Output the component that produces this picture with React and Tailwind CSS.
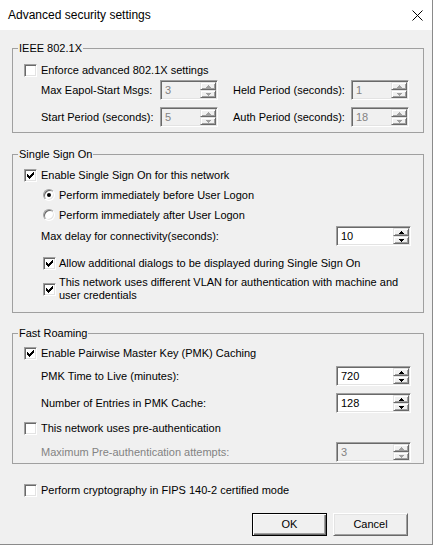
import React from "react";

const sunken =
  "border border-t-[#a0a0a0] border-l-[#a0a0a0] border-r-white border-b-white shadow-[inset_1px_1px_0_#696969,inset_-1px_-1px_0_#e3e3e3]";

function Check({ checked }) {
  const cols = [2, 3, 4, 3, 2, 1, 0];
  return (
    <span className={`flex h-[13px] w-[13px] shrink-0 items-center justify-center bg-white ${sunken}`}>
      {checked && (
        <svg width="7" height="7" viewBox="0 0 7 7" shapeRendering="crispEdges">
          {cols.map((y, x) => (
            <rect key={x} x={x} y={y} width="1" height="3" fill="#000" />
          ))}
        </svg>
      )}
    </span>
  );
}

function Radio({ checked }) {
  return (
    <span
      className={`flex h-[12px] w-[12px] shrink-0 items-center justify-center rounded-full bg-white ${sunken}`}
    >
      {checked && <span className="h-[4px] w-[4px] rounded-full bg-black" />}
    </span>
  );
}

function Arrow({ up, disabled }) {
  return (
    <svg width="5" height="3" viewBox="0 0 5 3" shapeRendering="crispEdges">
      <path
        d={up ? "M2 0h1v1h1v1h1v1H0V2h1V1h1z" : "M0 0h5v1H4v1H3v1H2V2H1V1H0z"}
        fill={disabled ? "#a0a0a0" : "#000"}
      />
    </svg>
  );
}

function SpinButton({ up, disabled }) {
  return (
    <span className="flex h-[8px] w-[16px] items-center justify-center border border-t-[#e3e3e3] border-l-[#e3e3e3] border-r-[#696969] border-b-[#696969] bg-[#f0f0f0] shadow-[inset_1px_1px_0_#fff,inset_-1px_-1px_0_#a0a0a0]">
      <Arrow up={up} disabled={disabled} />
    </span>
  );
}

function Spin({ value, disabled, wide }) {
  return (
    <div
      className={`flex h-[20px] shrink-0 ${wide ? "w-[75px]" : "w-[58px]"} ${sunken} ${
        disabled ? "bg-[#f0f0f0] text-[#838383]" : "bg-white text-black"
      }`}
    >
      <span className="flex flex-1 items-center pl-[4px]">{value}</span>
      <div className="flex flex-col py-[1px] pr-[1px]">
        <SpinButton up disabled={disabled} />
        <SpinButton disabled={disabled} />
      </div>
    </div>
  );
}

function Group({ title, className, children }) {
  return (
    <fieldset className={`w-[412px] border border-[#a0a0a0] ${className}`}>
      <legend className="ml-[5px] px-[1px] leading-[13px]">{title}</legend>
      {children}
    </fieldset>
  );
}

export default function App() {
  return (
    <div className="flex h-[545px] w-[433px] flex-col border-r border-b border-[#8a8a8a] bg-[#f0f0f0] font-['Liberation_Sans',Arial,sans-serif] text-[11px] text-black">
      {/* Barra de titulo */}
      <div className="flex h-[30px] shrink-0 items-center justify-between bg-white pl-[8px] pr-[9px]">
        <span className="text-[12px]">Advanced security settings</span>
        <svg width="11" height="11" viewBox="0 0 11 11">
          <path d="M0.5 0.5L10.5 10.5M10.5 0.5L0.5 10.5" stroke="#000" strokeWidth="1" />
        </svg>
      </div>

      <div className="flex flex-col pl-[12px]">
        {/* IEEE 802.1X */}
        <Group title="IEEE 802.1X" className="mt-[12px] pb-[5px]">
          <div className="ml-[11px] mt-[6px] flex h-[18px] items-center gap-[4px]">
            <Check />
            <span>Enforce advanced 802.1X settings</span>
          </div>
          <div className="ml-[28px] mt-[1px] flex h-[20px] items-center">
            <span className="w-[119px]">Max Eapol-Start Msgs:</span>
            <Spin value="3" disabled />
            <span className="ml-[15px] w-[118px]">Held Period (seconds):</span>
            <Spin value="1" disabled />
          </div>
          <div className="ml-[28px] mt-[7px] flex h-[20px] items-center">
            <span className="w-[119px]">Start Period (seconds):</span>
            <Spin value="5" disabled />
            <span className="ml-[15px] w-[118px]">Auth Period (seconds):</span>
            <Spin value="18" disabled />
          </div>
        </Group>

        {/* Single Sign On */}
        <Group title="Single Sign On" className="mt-[15px] pb-[10px]">
          <div className="ml-[11px] mt-[5px] flex h-[18px] items-center gap-[4px]">
            <Check checked />
            <span>Enable Single Sign On for this network</span>
          </div>
          <div className="ml-[30px] mt-[2px] flex h-[18px] items-center gap-[4px]">
            <Radio checked />
            <span>Perform immediately before User Logon</span>
          </div>
          <div className="ml-[30px] mt-[2px] flex h-[18px] items-center gap-[4px]">
            <Radio />
            <span>Perform immediately after User Logon</span>
          </div>
          <div className="ml-[28px] mr-[12px] mt-[2px] flex h-[20px] items-center justify-between">
            <span>Max delay for connectivity(seconds):</span>
            <Spin value="10" wide />
          </div>
          <div className="ml-[30px] mt-[8px] flex h-[18px] items-center gap-[3px]">
            <Check checked />
            <span>Allow additional dialogs to be displayed during Single Sign On</span>
          </div>
          <div className="ml-[30px] mt-[4px] flex items-center gap-[3px]">
            <Check checked />
            <span className="leading-[13px]">
              This network uses different VLAN for authentication with machine and
              <br />
              user credentials
            </span>
          </div>
        </Group>

        {/* Fast Roaming */}
        <Group title="Fast Roaming" className="mt-[14px] pb-[1px]">
          <div className="ml-[11px] mt-[4px] flex h-[18px] items-center gap-[4px]">
            <Check checked />
            <span>Enable Pairwise Master Key (PMK) Caching</span>
          </div>
          <div className="ml-[28px] mr-[12px] mt-[4px] flex h-[20px] items-center justify-between">
            <span>PMK Time to Live (minutes):</span>
            <Spin value="720" wide />
          </div>
          <div className="ml-[28px] mr-[12px] mt-[7px] flex h-[20px] items-center justify-between">
            <span>Number of Entries in PMK Cache:</span>
            <Spin value="128" wide />
          </div>
          <div className="ml-[11px] mt-[6px] flex h-[18px] items-center gap-[4px]">
            <Check />
            <span>This network uses pre-authentication</span>
          </div>
          <div className="ml-[28px] mr-[12px] mt-[5px] flex h-[20px] items-center justify-between">
            <span className="text-[#838383]">Maximum Pre-authentication attempts:</span>
            <Spin value="3" disabled wide />
          </div>
        </Group>

        {/* FIPS */}
        <div className="ml-[12px] mt-[17px] flex h-[18px] items-center gap-[4px]">
          <Check />
          <span>Perform cryptography in FIPS 140-2 certified mode</span>
        </div>

        {/* Botones */}
        <div className="mt-[14px] flex justify-end gap-[6px] pr-[24px]">
          <button
            type="button"
            className="h-[23px] w-[75px] border border-black bg-[#f0f0f0] shadow-[inset_1px_1px_0_#fff,inset_-1px_-1px_0_#696969,inset_-2px_-2px_0_#a0a0a0]"
          >
            OK
          </button>
          <button
            type="button"
            className="h-[23px] w-[75px] border border-t-white border-l-white border-r-[#696969] border-b-[#696969] bg-[#f0f0f0] shadow-[inset_1px_1px_0_#e3e3e3,inset_-1px_-1px_0_#a0a0a0]"
          >
            Cancel
          </button>
        </div>
      </div>
    </div>
  );
}
